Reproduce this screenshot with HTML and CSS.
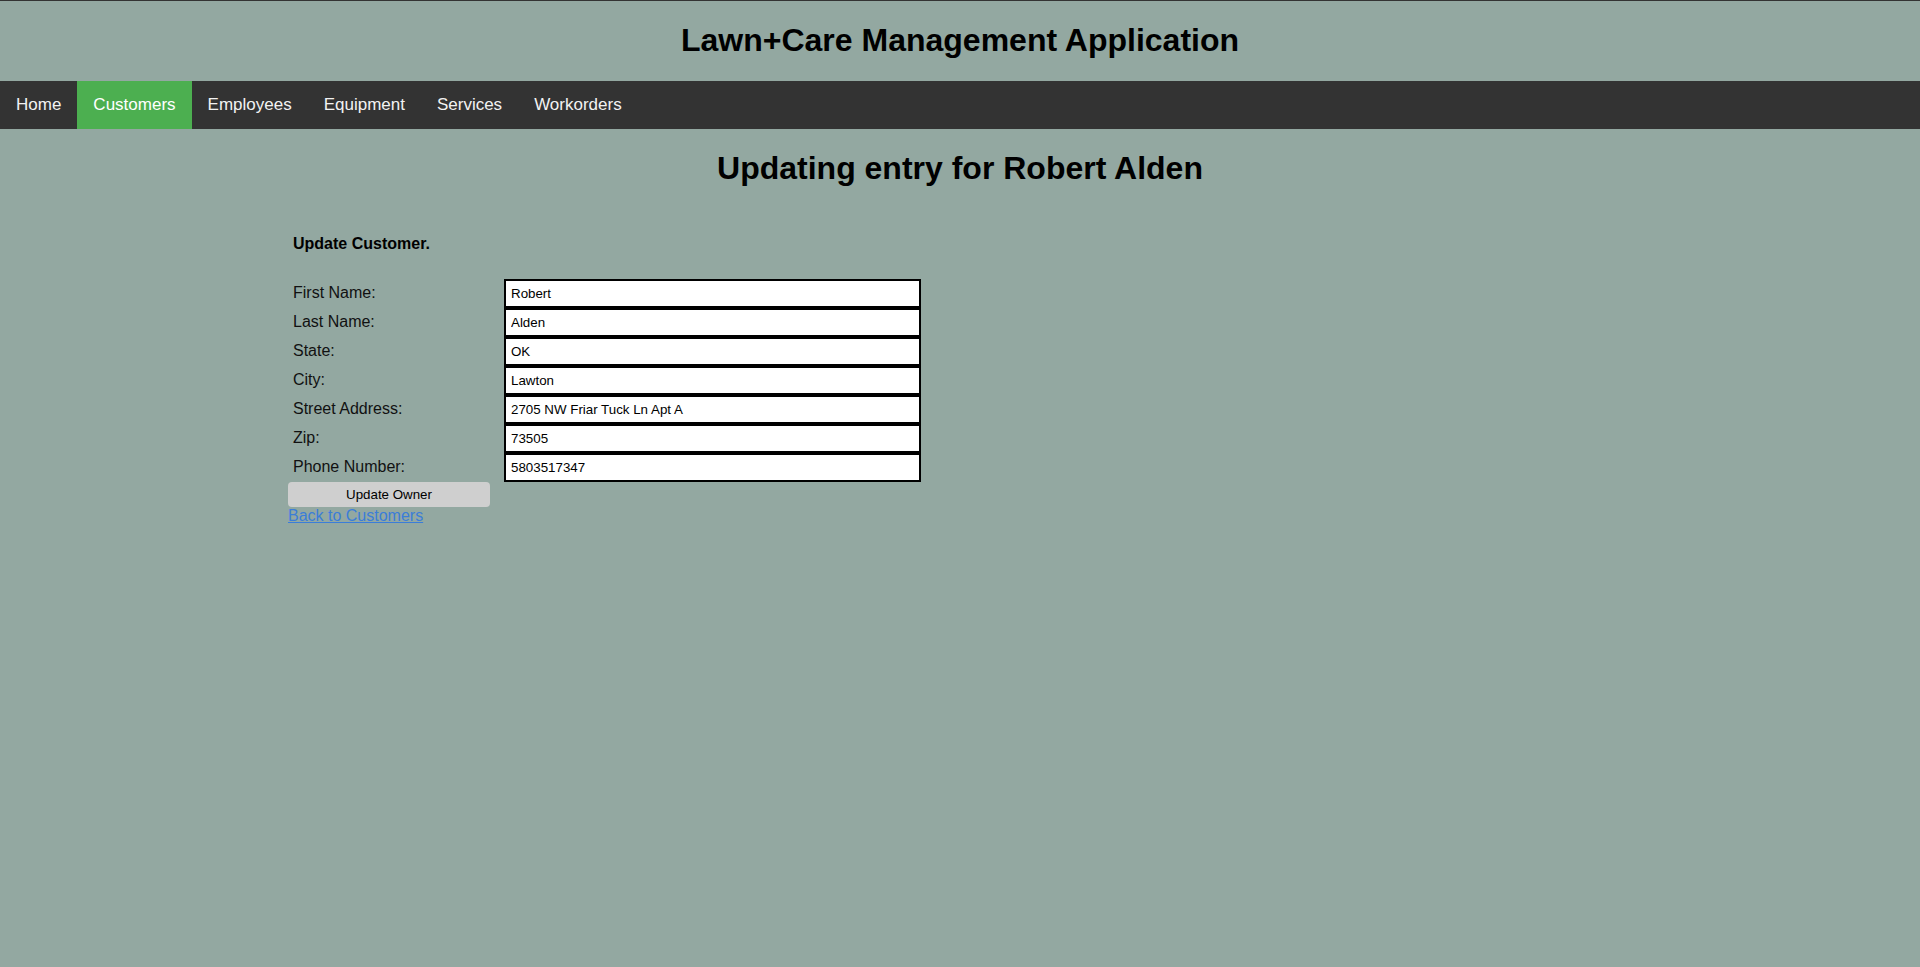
FILE: index.html
```html
<!DOCTYPE html>
<html lang="en">
<head>
<meta charset="utf-8">
<title>Lawn+Care Management Application</title>
<link rel="stylesheet" href="styles.css">
</head>
<body>
<header class="header">
  <h1 class="site-title">Lawn+Care Management Application</h1>
</header>
<nav class="topnav">
  <a href="#" class="nav-link">Home</a>
  <a href="#" class="nav-link active">Customers</a>
  <a href="#" class="nav-link">Employees</a>
  <a href="#" class="nav-link">Equipment</a>
  <a href="#" class="nav-link">Services</a>
  <a href="#" class="nav-link">Workorders</a>
</nav>
<h1 class="page-title">Updating entry for Robert Alden</h1>
<main class="content">
  <form class="customer-form">
    <div class="form-title">Update Customer.</div>
    <div class="rows">
      <div class="row"><label class="label">First Name:</label><input class="field" type="text" value="Robert"></div>
      <div class="row"><label class="label">Last Name:</label><input class="field" type="text" value="Alden"></div>
      <div class="row"><label class="label">State:</label><input class="field" type="text" value="OK"></div>
      <div class="row"><label class="label">City:</label><input class="field" type="text" value="Lawton"></div>
      <div class="row"><label class="label">Street Address:</label><input class="field" type="text" value="2705 NW Friar Tuck Ln Apt A"></div>
      <div class="row"><label class="label">Zip:</label><input class="field" type="text" value="73505"></div>
      <div class="row"><label class="label">Phone Number:</label><input class="field" type="text" value="5803517347"></div>
    </div>
    <button type="button" class="submit-btn">Update Owner</button>
  </form>
  <a href="#" class="back-link">Back to Customers</a>
</main>
</body>
</html>
```
FILE: styles.css
```css
html, body {
  margin: 0;
  padding: 0;
}

body {
  background: #93a8a1;
  border-top: 1px solid #333333;
  font-family: "Liberation Sans", Arial, sans-serif;
  color: #000000;
  min-height: 966px;
}

.header {
  text-align: center;
}

.site-title {
  margin: 21px 0 22px;
  font-size: 32px;
  line-height: 37px;
  font-weight: bold;
}

.topnav {
  display: flex;
  background: #333333;
}

.nav-link {
  display: block;
  padding: 14px 16px;
  font-size: 17px;
  line-height: 20px;
  color: #f2f2f2;
  text-decoration: none;
}

.nav-link.active {
  background: #4caf50;
  color: #ffffff;
}

.page-title {
  margin: 21px 0 0;
  font-size: 32px;
  line-height: 37px;
  font-weight: bold;
  text-align: center;
}

.content {
  margin: 0 15%;
}

.form-title {
  margin: 48px 0 26px;
  padding-left: 5px;
  font-size: 16px;
  font-weight: bold;
  line-height: 18px;
}

.rows {
  display: flex;
  flex-direction: column;
  padding-left: 5px;
}

.row {
  display: flex;
  align-items: baseline;
}

.label {
  width: 211px;
  font-size: 16px;
  line-height: 18px;
  color: #111111;
}

.field {
  box-sizing: border-box;
  width: 417px;
  height: 29px;
  margin: 0;
  padding: 0 5px;
  border: 2px solid #000000;
  background: #ffffff;
  font-family: "Liberation Sans", Arial, sans-serif;
  font-size: 13.33px;
  color: #000000;
}

.submit-btn {
  display: block;
  box-sizing: border-box;
  width: 202px;
  height: 25px;
  margin: 0;
  padding: 0;
  border: none;
  border-radius: 4px;
  background: #cfcfcf;
  font-family: "Liberation Sans", Arial, sans-serif;
  font-size: 13.33px;
  color: #000000;
}

.back-link {
  display: inline-block;
  font-size: 16px;
  line-height: 18px;
  color: #3b7dd8;
  text-decoration: underline;
}
```
